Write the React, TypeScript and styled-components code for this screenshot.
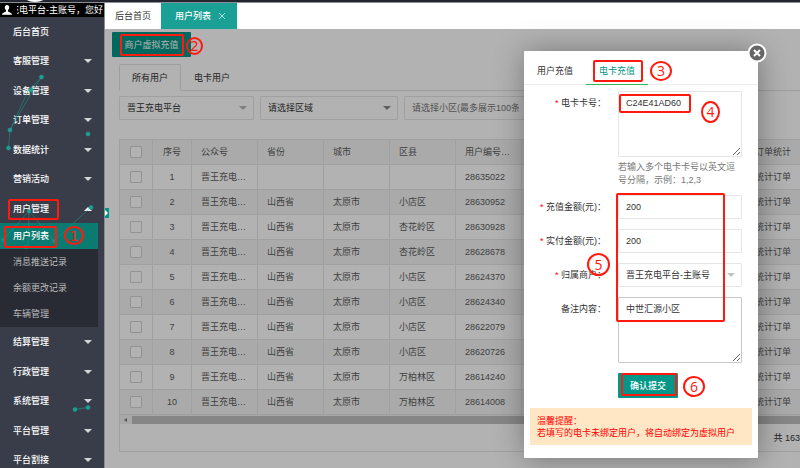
import React from "react";
import styled, { createGlobalStyle, css } from "styled-components";

const teal = "#009688";
const red = "#ff1a0d";

const GlobalStyle = createGlobalStyle`
  *, *::before, *::after { box-sizing: border-box; }
  body {
    margin: 0;
    overflow: hidden;
    background: #fff;
    color: #333;
    font: 9px/12px "Liberation Sans", "Noto Sans CJK SC", sans-serif;
  }
  button, input, select, textarea { font: inherit; color: inherit; margin: 0; }
  ul { list-style: none; margin: 0; padding: 0; }
  a { color: inherit; text-decoration: none; }
`;

const Page = styled.div`
  display: flex;
  flex-direction: column;
  height: 100vh;
  overflow: hidden;
`;

const TopStrip = styled.header`
  flex: none;
  height: 3px;
  background: #23262e;
  border-bottom: 1px solid #8c8f98;
  padding-left: 25px;
  overflow: hidden;
`;

const LogoEdge = styled.svg`
  display: block;
  width: 20px;
  height: 2px;
`;

const Body = styled.div`
  flex: 1;
  display: flex;
  min-height: 0;
`;

const Sidebar = styled.aside`
  position: relative;
  flex: none;
  width: 105px;
  background: #393d49;
  border-right: 1px solid #8a8d95;
  color: #fff;
`;

const UserBar = styled.div`
  display: flex;
  align-items: center;
  gap: 5px;
  height: 14px;
  padding: 0 1px 0 2px;
  background: #000;
  svg { flex: none; width: 10px; height: 10px; }
`;

const UserName = styled.div`
  flex: 1;
  display: flex;
  justify-content: flex-end;
  overflow: hidden;
  white-space: nowrap;
`;

const MenuItem = styled.li`
  &:nth-child(odd) > button { height: 29px; }
`;

const MenuButton = styled.button`
  display: flex;
  align-items: center;
  justify-content: space-between;
  width: 100%;
  height: 30px;
  padding: 0 12px 0 13px;
  border: 0;
  background: none;
  color: #fff;
  font-weight: 500;
`;

const Caret = styled.svg<{ $up?: boolean; $color?: string }>`
  flex: none;
  width: 8px;
  height: 4px;
  fill: ${(p) => p.$color || "#d5d6da"};
  transform: ${(p) => (p.$up ? "rotate(180deg)" : "none")};
`;

const SubMenu = styled.ul`
  width: 98px;
  background: #282b33;
  color: #b9babd;
`;

const SubLink = styled.a<{ $active?: boolean }>`
  display: flex;
  align-items: center;
  height: 26px;
  padding-left: 13px;
  ${(p) => p.$active && css`background: #0b7b71; color: #fff; font-weight: 500;`}
`;

const Anchor = styled.span`
  position: relative;
  z-index: 2;
`;

const Network = styled.svg`
  position: absolute;
  left: 0;
  top: 0;
  width: 104px;
  height: 465px;
  pointer-events: none;
`;

const Box = styled.span<{ $x: number; $y: number; $w: number; $h: number }>`
  position: absolute;
  z-index: 5;
  left: ${(p) => p.$x}px;
  top: ${(p) => p.$y}px;
  width: ${(p) => p.$w}px;
  height: ${(p) => p.$h}px;
  border: 2px solid ${red};
  border-radius: 2px;
  pointer-events: none;
`;

const Ring = styled(Box)<{ $serif?: boolean }>`
  display: flex;
  align-items: center;
  justify-content: center;
  border-radius: 50%;
  color: ${red};
  font: 14px/14px ${(p) => (p.$serif ? '"DejaVu Sans"' : '"Open Sans"')}, sans-serif;
`;

const Content = styled.div`
  flex: 1;
  display: flex;
  flex-direction: column;
  min-width: 0;
`;

const PageTabs = styled.nav`
  flex: none;
  display: flex;
  height: 26px;
  background: #fff;
`;

const PageTab = styled.button<{ $active?: boolean }>`
  display: flex;
  align-items: center;
  gap: 8px;
  padding: 0 ${(p) => (p.$active ? 12 : 10)}px 0 ${(p) => (p.$active ? 14 : 10)}px;
  border: 0;
  background: ${(p) => (p.$active ? "#1aa094" : "#fff")};
  color: ${(p) => (p.$active ? "#fff" : "#333")};
  font-weight: ${(p) => (p.$active ? 500 : 400)};
  svg { width: 6px; height: 6px; stroke: #a8dcd6; }
`;

const Main = styled.main`
  position: relative;
  flex: 1;
  min-height: 0;
  padding: 3px 0 0 14px;
`;

const Shade = styled.div`
  position: absolute;
  inset: 0;
  z-index: 3;
  background: rgba(0, 0, 0, 0.3);
`;

const Collapse = styled.button`
  position: absolute;
  z-index: 4;
  left: 0;
  top: 179px;
  width: 4px;
  height: 10px;
  padding: 0;
  border: 0;
  background: ${teal};
  svg { display: block; width: 4px; height: 10px; }
`;

const RechargeRow = styled.div`
  position: relative;
  margin-left: -7px;
`;

const Solid = styled.button<{ $w: number }>`
  display: block;
  width: ${(p) => p.$w}px;
  height: 25px;
  padding: 0;
  border: 0;
  border-radius: 1px;
  background: ${teal};
  color: #fff;
`;

const ListTabs = styled.div`
  display: flex;
  height: 27px;
  margin-top: 7px;
  border-bottom: 1px solid #e2e2e2;
`;

const ListTab = styled.button<{ $active?: boolean }>`
  height: 27px;
  width: 62px;
  padding: 0;
  border: 1px solid ${(p) => (p.$active ? "#e2e2e2" : "transparent")};
  border-bottom-color: ${(p) => (p.$active ? "#fff" : "transparent")};
  border-radius: 2px 2px 0 0;
  background: none;
`;

const Filters = styled.div`
  display: flex;
  gap: 6px;
  margin: 5px 0 19px;
`;

const Field = styled.div<{ $w?: number }>`
  position: relative;
  display: flex;
  width: ${(p) => (p.$w ? p.$w + "px" : "100%")};
  ${Caret} {
    position: absolute;
    right: 7px;
    top: 10px;
    pointer-events: none;
  }
`;

const control = css`
  width: 100%;
  border: 1px solid #e6e6e6;
  border-radius: 1px;
  background: #fff;
  outline: none;
`;

const Input = styled.input`
  ${control}
  height: 24px;
  padding: 0 7px;
  &::placeholder { color: #757575; opacity: 1; }
`;

const Select = styled.select`
  ${control}
  appearance: none;
  height: 24px;
  padding: 0 7px;
`;

const TextArea = styled.textarea<{ $strong?: boolean }>`
  ${control}
  display: block;
  height: 66px;
  padding: 5px 7px;
  resize: vertical;
  border-color: ${(p) => (p.$strong ? "#c9c9c9" : "#e6e6e6")};
`;

const TableCard = styled.section`
  border: 1px solid #e6e6e6;
  border-right: 0;
  overflow: hidden;
`;

const Table = styled.table`
  width: 692px;
  table-layout: fixed;
  border-collapse: separate;
  border-spacing: 0;
  color: #5c5c5c;
  tr { background: #fff; }
  thead tr, tbody tr:nth-child(even) { background: #f4f4f4; }
  th, td {
    height: 25px;
    padding: 0 9px;
    border: solid #e6e6e6;
    border-width: 0 1px 1px 0;
    text-align: left;
    font-weight: 400;
    white-space: nowrap;
    overflow: hidden;
    text-overflow: ellipsis;
  }
  th:nth-child(-n + 2), td:nth-child(-n + 2) { text-align: center; }
`;

const Check = styled.input`
  appearance: none;
  display: block;
  width: 12px;
  height: 12px;
  margin: 0 auto;
  border: 1px solid #d2d2d2;
  border-radius: 1px;
  background: #fff;
`;

const ScrollTrack = styled.div`
  display: flex;
  align-items: center;
  gap: 5px;
  height: 9px;
  padding-left: 4px;
  background: #f1f1f1;
  svg { width: 3px; height: 4px; fill: #777; }
`;

const ScrollThumb = styled.div`
  flex: 1;
  height: 8px;
  background: #c1c1c1;
`;

const Pager = styled.div`
  display: flex;
  justify-content: flex-end;
  align-items: center;
  height: 27px;
`;

const Dialog = styled.section`
  position: absolute;
  z-index: 4;
  top: 22px;
  right: 42px;
  width: 234px;
  background: #fff;
  padding-bottom: 13px;
  border-radius: 1px;
  box-shadow: 1px 1px 30px rgba(0, 0, 0, 0.35);
`;

const CloseButton = styled.button`
  position: absolute;
  right: -9px;
  top: -8px;
  width: 20px;
  height: 20px;
  padding: 0;
  border: 0;
  background: none;
  svg { display: block; width: 20px; height: 20px; }
`;

const DialogTabs = styled.div`
  display: flex;
  height: 34px;
  padding: 6px 0 0;
  border-bottom: 1px solid #ececec;
`;

const DialogTab = styled.button<{ $active?: boolean }>`
  width: 62px;
  height: 28px;
  padding: 0;
  border: 0;
  border-bottom: 1px solid ${(p) => (p.$active ? "#35b558" : "transparent")};
  background: none;
  color: ${(p) => (p.$active ? teal : "#333")};
`;

const Form = styled.form`
  display: grid;
  grid-template-columns: 82px 124px;
  column-gap: 12px;
  row-gap: 10px;
  padding-top: 6px;
`;

const Label = styled.label<{ $required?: boolean }>`
  padding-top: 6px;
  text-align: right;
  white-space: nowrap;
  ${(p) => p.$required && css`&::before { content: "* "; color: red; }`}
`;

const Hint = styled.p`
  margin: 4px 0 -2px;
  color: #777;
  line-height: 13px;
`;

const Submit = styled(Solid)`
  grid-column: 2;
  font-weight: 500;
`;

const Notice = styled.p`
  margin: 10px 6px 0;
  padding: 7px 7px 6px;
  background: #ffe6c4;
  color: red;
  line-height: 12px;
`;

const Down = (p: { up?: boolean; color?: string }) => (
  <Caret viewBox="0 0 8 4" $up={p.up} $color={p.color} aria-hidden="true">
    <path d="M0 0h8L4 4z" />
  </Caret>
);

const before = ["客服管理", "设备管理", "订单管理", "数据统计", "营销活动"];
const after = ["结算管理", "行政管理", "系统管理", "平台管理", "平台割接"];

const rows = [
  ["", "", "", "28635022"],
  ["山西省", "太原市", "小店区", "28630952"],
  ["山西省", "太原市", "杏花岭区", "28630928"],
  ["山西省", "太原市", "杏花岭区", "28628678"],
  ["山西省", "太原市", "小店区", "28624370"],
  ["山西省", "太原市", "小店区", "28624340"],
  ["山西省", "太原市", "小店区", "28622079"],
  ["山西省", "太原市", "小店区", "28620726"],
  ["山西省", "太原市", "万柏林区", "28614240"],
  ["山西省", "太原市", "万柏林区", "28614008"],
];

const SideNav = () => (
  <Sidebar>
    <UserBar>
      <svg viewBox="0 0 10 10" fill="#fff" aria-hidden="true">
        <path d="M5 0C3.600 0 2.800 1 2.800 2.400c0 1 .5 2 1.200 2.600v1.500L1 8C.3 8.300 0 8.900 0 9.800h10c0-.9-.3-1.500-1-1.800L6 6.500V5c.7-.6 1.200-1.600 1.200-2.600C7.200 1 6.400 0 5 0z" />
      </svg>
      <UserName>充电平台-主账号，您好</UserName>
    </UserBar>
    <ul>
      <MenuItem><MenuButton>后台首页</MenuButton></MenuItem>
      {before.map((t) => (
        <MenuItem key={t}><MenuButton>{t}<Down /></MenuButton></MenuItem>
      ))}
      <MenuItem>
        <MenuButton>
          <Anchor>用户管理<Box $x={-5} $y={-4} $w={51} $h={21} /></Anchor>
          <Down up color="#fff" />
        </MenuButton>
        <SubMenu>
          <li>
            <SubLink href="#users" $active>
              <Anchor>
                用户列表
                <Box $x={-9} $y={-4} $w={53} $h={22} />
                <Ring $x={51} $y={-4} $w={20} $h={19} $serif>1</Ring>
              </Anchor>
            </SubLink>
          </li>
          <li><SubLink href="#push">消息推送记录</SubLink></li>
          <li><SubLink href="#balance">余额更改记录</SubLink></li>
          <li><SubLink href="#vehicles">车辆管理</SubLink></li>
        </SubMenu>
      </MenuItem>
      {after.map((t) => (
        <MenuItem key={t}><MenuButton>{t}<Down /></MenuButton></MenuItem>
      ))}
    </ul>
    <Network viewBox="0 3 104 465" fill="#1aa094" stroke="#1aa094" strokeWidth="0.6" aria-hidden="true">
      <path fill="none" strokeOpacity="0.8" d="M41.500 77L28 91L10 130L8.500 148M41.500 77L32 92L10 130M91 207L54 241M29 211L3 240M29 211L28 247M29 211L54 241" />
      <circle cx="41.500" cy="77" r="2" />
      <circle cx="31" cy="90" r="2" />
      <circle cx="10" cy="130" r="2" />
      <circle cx="8.500" cy="148" r="2" />
      <circle cx="88" cy="134" r="2" />
      <circle cx="91" cy="207.500" r="2" />
      <circle cx="29" cy="211" r="2" />
      <g opacity="0.5">
        <circle cx="3" cy="240" r="2" />
        <circle cx="26" cy="247" r="2" />
        <circle cx="54" cy="241" r="2" />
      </g>
      <path d="M75 409.500L88 407.500" />
      <circle cx="75" cy="409.500" r="2" />
      <circle cx="88" cy="407.500" r="2" />
    </Network>
  </Sidebar>
);

const UserTable = () => (
  <TableCard>
    <Table>
      <colgroup>
        {[33, 39, 66, 66, 66, 66, 66, 112, 112, 66].map((w, i) => <col key={i} width={w} />)}
      </colgroup>
      <thead>
        <tr>
          <th><Check type="checkbox" aria-label="全选" /></th>
          {["序号", "公众号", "省份", "城市", "区县", "用户编号…", "", "", "订单统计"].map((t, i) => <th key={i}>{t}</th>)}
        </tr>
      </thead>
      <tbody>
        {rows.map((r, i) => (
          <tr key={i}>
            <td><Check type="checkbox" aria-label={`选择 ${i + 1}`} /></td>
            <td>{i + 1}</td>
            <td>晋王充电…</td>
            {r.map((c, j) => <td key={j}>{c}</td>)}
            <td />
            <td />
            <td><a href="#orders">统计订单</a></td>
          </tr>
        ))}
      </tbody>
    </Table>
    <ScrollTrack>
      <svg viewBox="0 0 3 4" aria-hidden="true"><path d="M3 0v4L0 2z" /></svg>
      <ScrollThumb />
    </ScrollTrack>
    <Pager>共 163</Pager>
  </TableCard>
);

const RechargeDialog = () => (
  <Dialog role="dialog" aria-label="电卡充值">
    <DialogTabs>
      <DialogTab>用户充值</DialogTab>
      <DialogTab $active>电卡充值</DialogTab>
    </DialogTabs>
    <Form onSubmit={(e) => e.preventDefault()}>
      <Label htmlFor="card" $required>电卡卡号：</Label>
      <div>
        <TextArea id="card" defaultValue="C24E41AD60" />
        <Hint>若输入多个电卡卡号以英文逗号分隔，示例：1,2,3</Hint>
      </div>
      <Label htmlFor="amount" $required>充值金额(元)：</Label>
      <Input id="amount" defaultValue="200" />
      <Label htmlFor="paid" $required>实付金额(元)：</Label>
      <Input id="paid" defaultValue="200" />
      <Label htmlFor="merchant" $required>归属商户：</Label>
      <Field>
        <Select id="merchant"><option>晋王充电平台-主账号</option></Select>
        <Down color="#c2c2c2" />
      </Field>
      <Label htmlFor="remark">备注内容：</Label>
      <TextArea id="remark" $strong defaultValue="中世汇源小区" />
      <Submit type="submit" $w={60}>确认提交</Submit>
    </Form>
    <Notice>温馨提醒：<br />若填写的电卡未绑定用户，将自动绑定为虚拟用户</Notice>
    <CloseButton aria-label="关闭">
      <svg viewBox="0 0 20 20" aria-hidden="true">
        <circle cx="10" cy="10" r="8.500" fill="#666" stroke="#fff" strokeWidth="2" />
        <path d="M7 7l6 6M13 7l-6 6" stroke="#fff" strokeWidth="2" />
      </svg>
    </CloseButton>
    <Box $x={69} $y={9} $w={50} $h={22} />
    <Ring $x={126} $y={10} $w={22} $h={20}>3</Ring>
    <Box $x={95} $y={43} $w={72} $h={19} />
    <Ring $x={177} $y={50} $w={19} $h={22}>4</Ring>
    <Box $x={92} $y={142} $w={109} $h={129} />
    <Ring $x={63} $y={202} $w={23} $h={23}>5</Ring>
    <Box $x={97} $y={322} $w={56} $h={23} />
    <Ring $x={159} $y={325} $w={22} $h={21}>6</Ring>
  </Dialog>
);

export default function App() {
  return (
    <Page>
      <GlobalStyle />
      <TopStrip>
        <LogoEdge viewBox="0 0 20 2" aria-hidden="true"><ellipse cx="10" cy="-5" rx="12" ry="7" fill="#fff" /></LogoEdge>
      </TopStrip>
      <Body>
        <SideNav />
        <Content>
          <PageTabs>
            <PageTab>后台首页</PageTab>
            <PageTab $active>
              用户列表
              <svg viewBox="0 0 6 6" aria-hidden="true"><path d="M0 0l6 6M6 0L0 6" /></svg>
            </PageTab>
          </PageTabs>
          <Main>
            <RechargeRow>
              <Solid $w={79}>商户虚拟充值</Solid>
              <Box $x={8} $y={2} $w={64} $h={22} />
              <Ring $x={74} $y={5} $w={17} $h={18} $serif>2</Ring>
            </RechargeRow>
            <ListTabs>
              <ListTab $active>所有用户</ListTab>
              <ListTab>电卡用户</ListTab>
            </ListTabs>
            <Filters>
              <Field $w={135}>
                <Select aria-label="平台"><option>晋王充电平台</option></Select>
                <Down color="#b5b5b5" />
              </Field>
              <Field $w={138}>
                <Select aria-label="区域"><option>请选择区域</option></Select>
                <Down color="#888" />
              </Field>
              <Field $w={123}>
                <Input aria-label="小区" placeholder="请选择小区(最多展示100条)" />
              </Field>
            </Filters>
            <UserTable />
            <Shade />
            <Collapse aria-label="展开">
              <svg viewBox="0 0 4 10" fill="#fff" aria-hidden="true"><path d="M0 2l3 3-3 3z" /></svg>
            </Collapse>
            <RechargeDialog />
          </Main>
        </Content>
      </Body>
    </Page>
  );
}
